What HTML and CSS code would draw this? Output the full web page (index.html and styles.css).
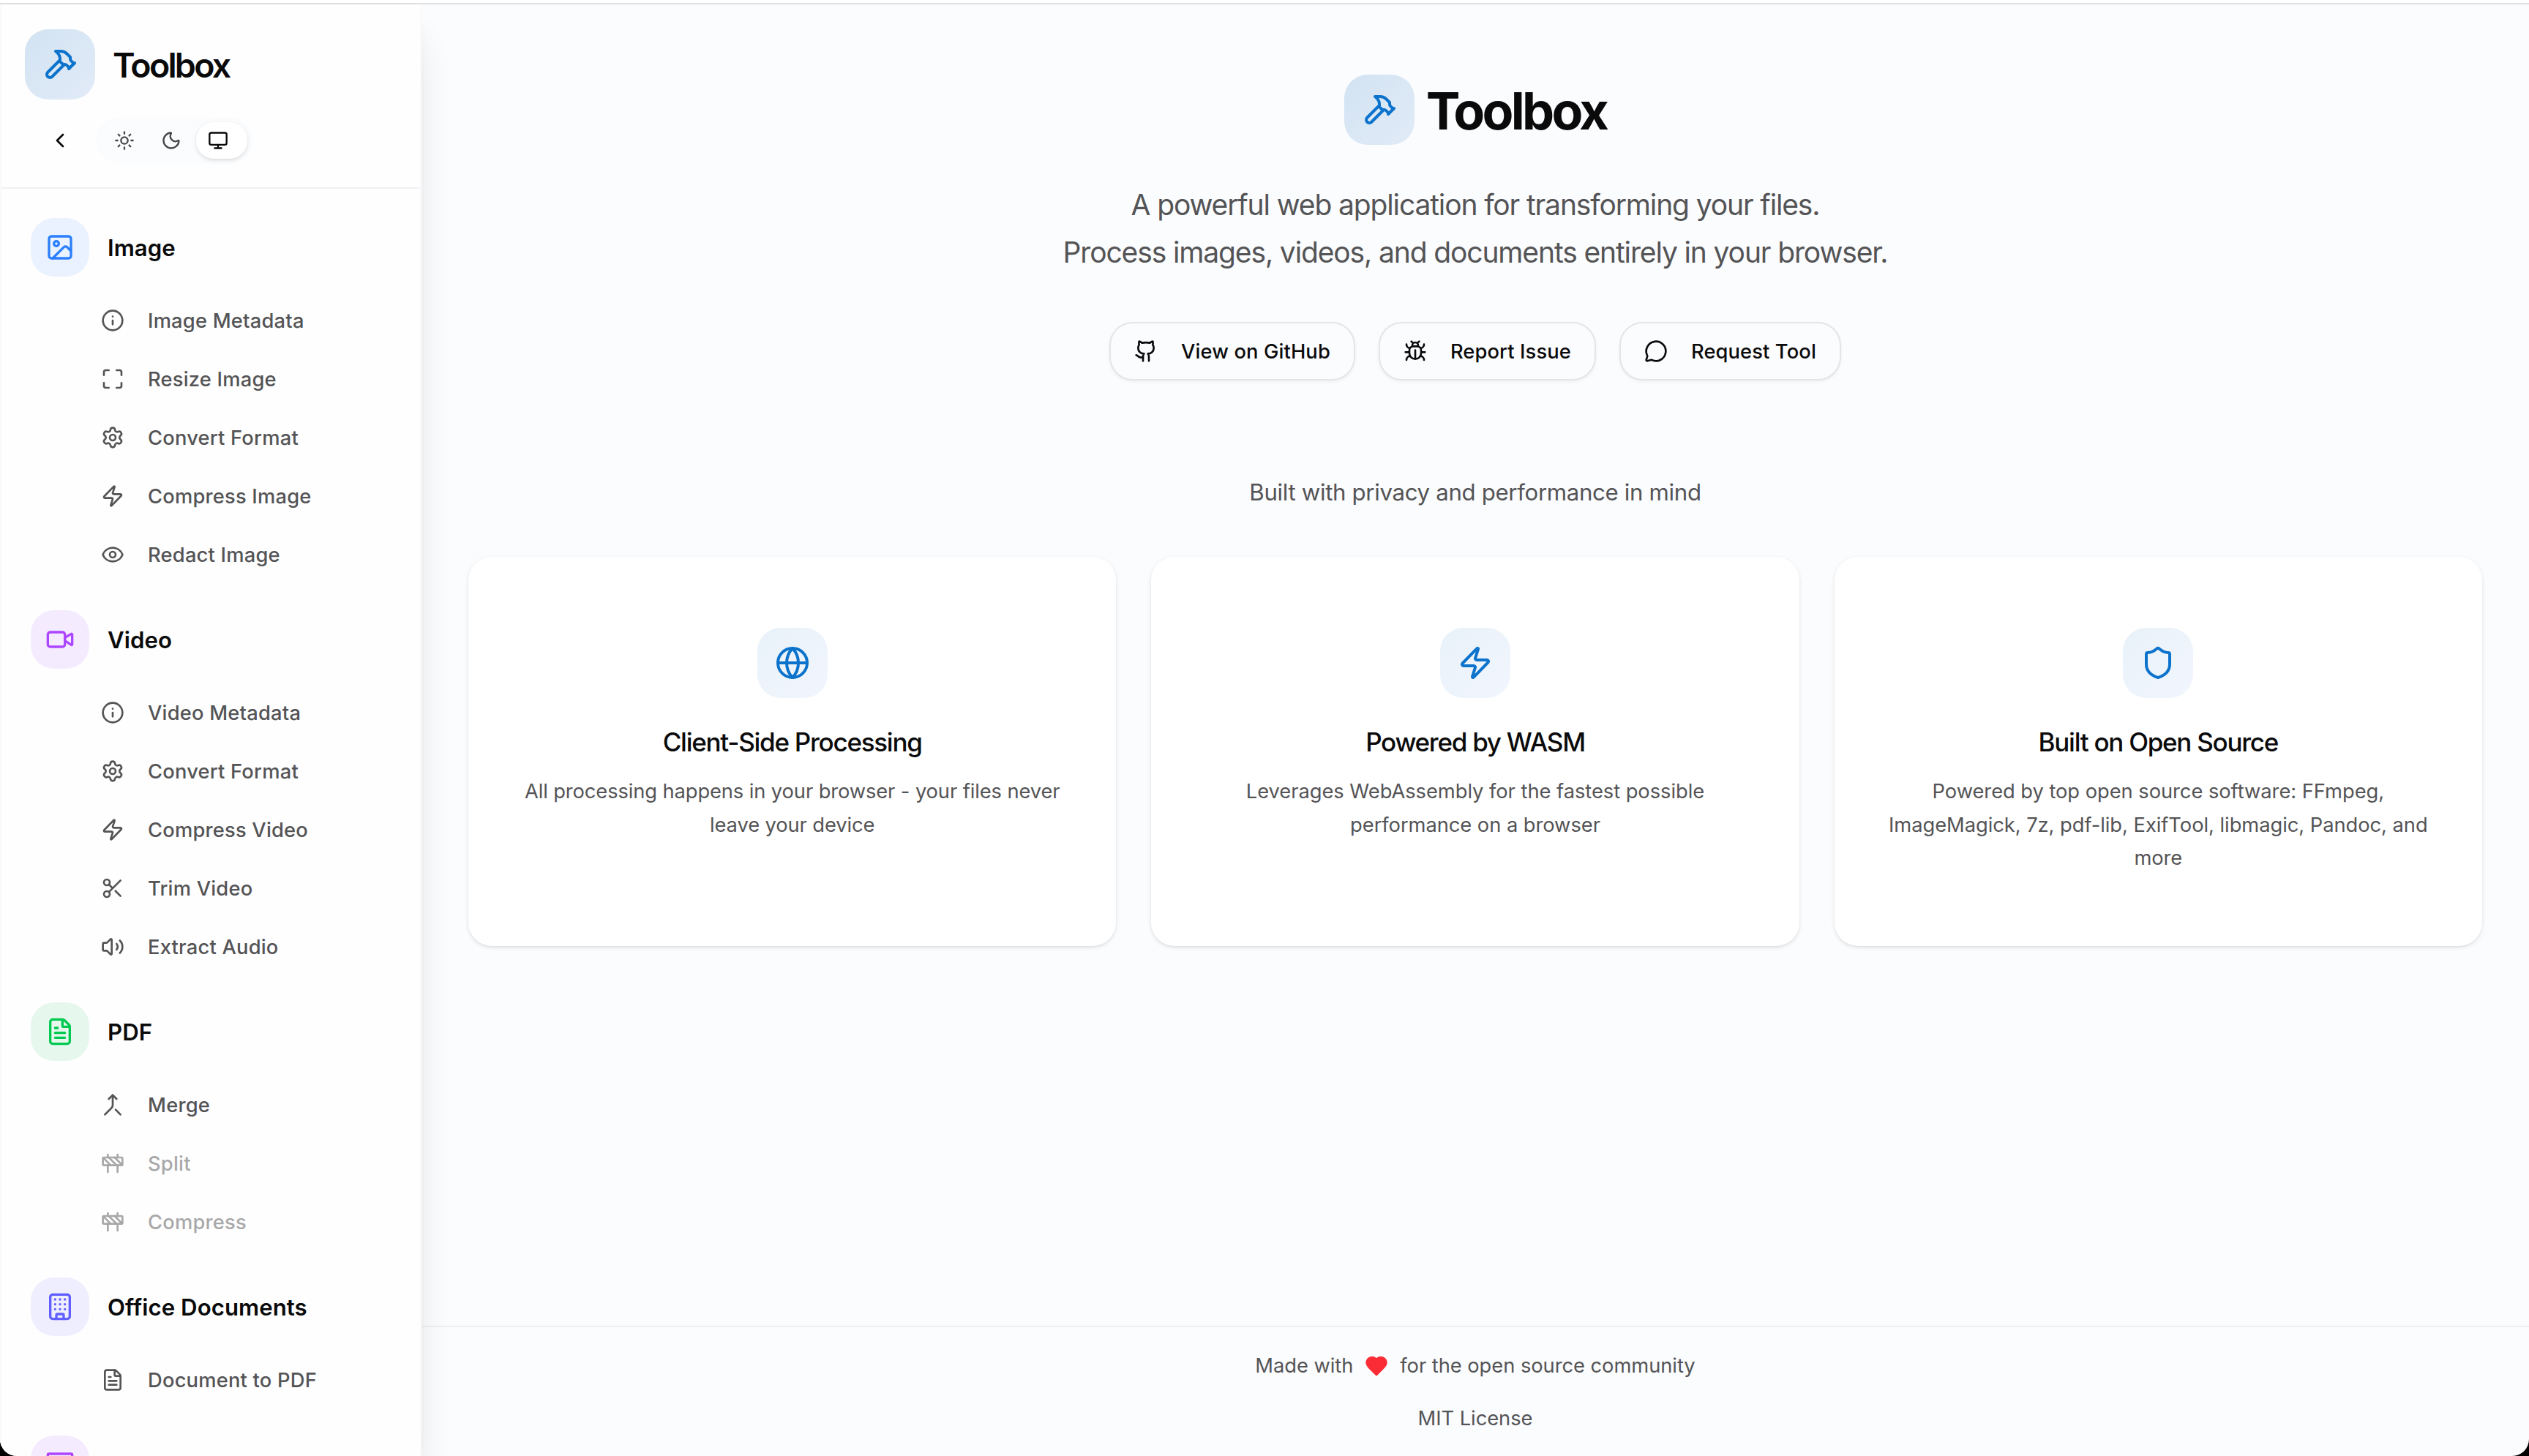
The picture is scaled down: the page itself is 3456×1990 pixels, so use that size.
FILE: index.html
```html
<!DOCTYPE html>
<html lang="en">
<head>
<meta charset="utf-8">
<title>Toolbox</title>
<link rel="stylesheet" href="styles.css">
</head>
<body>
<svg class="sprite" aria-hidden="true">
  <symbol id="hammer" viewBox="0 0 24 24"><path d="m15 12-8.373 8.373a1 1 0 1 1-3-3L12 9"/><path d="m18 15 4-4"/><path d="m21.5 11.5-1.914-1.914A2 2 0 0 1 19 8.172V7l-2.26-2.26a6 6 0 0 0-4.202-1.756L9 2.96l.92.82A6.18 6.18 0 0 1 12 8.4V10l2 2h1.172a2 2 0 0 1 1.414.586L18.5 14.5"/></symbol>
  <symbol id="chevron-left" viewBox="0 0 24 24"><path d="m15 18-6-6 6-6"/></symbol>
  <symbol id="sun" viewBox="0 0 24 24"><circle cx="12" cy="12" r="4"/><path d="M12 2v2M12 20v2M4.93 4.93l1.41 1.41M17.66 17.66l1.41 1.41M2 12h2M20 12h2M6.34 17.66l-1.41 1.41M19.07 4.93l-1.41 1.41"/></symbol>
  <symbol id="moon" viewBox="0 0 24 24"><path d="M20.985 12.486a9 9 0 1 1-9.473-9.472c.405-.022.617.46.402.803a6 6 0 0 0 8.268 8.268c.344-.215.825-.004.803.401"/></symbol>
  <symbol id="monitor" viewBox="0 0 24 24"><rect x="2" y="3" width="20" height="14" rx="2"/><path d="M8 21h8M12 17v4"/></symbol>
  <symbol id="image" viewBox="0 0 24 24"><rect x="3" y="3" width="18" height="18" rx="2"/><circle cx="9" cy="9" r="2"/><path d="m21 15-3.086-3.086a2 2 0 0 0-2.828 0L6 21"/></symbol>
  <symbol id="info" viewBox="0 0 24 24"><circle cx="12" cy="12" r="10"/><path d="M12 16v-4M12 8h.01"/></symbol>
  <symbol id="maximize" viewBox="0 0 24 24"><path d="M8 3H5a2 2 0 0 0-2 2v3M21 8V5a2 2 0 0 0-2-2h-3M3 16v3a2 2 0 0 0 2 2h3M16 21h3a2 2 0 0 0 2-2v-3"/></symbol>
  <symbol id="settings" viewBox="0 0 24 24"><path d="M9.671 4.136a2.34 2.34 0 0 1 4.659 0 2.34 2.34 0 0 0 3.319 1.915 2.34 2.34 0 0 1 2.33 4.033 2.34 2.34 0 0 0 0 3.831 2.34 2.34 0 0 1-2.33 4.033 2.34 2.34 0 0 0-3.319 1.915 2.34 2.34 0 0 1-4.659 0 2.34 2.34 0 0 0-3.32-1.915 2.34 2.34 0 0 1-2.33-4.033 2.34 2.34 0 0 0 0-3.831A2.34 2.34 0 0 1 6.35 6.051a2.34 2.34 0 0 0 3.319-1.915"/><circle cx="12" cy="12" r="3"/></symbol>
  <symbol id="zap" viewBox="0 0 24 24"><path d="M4 14a1 1 0 0 1-.78-1.63l9.9-10.2a.5.5 0 0 1 .86.46l-1.92 6.02A1 1 0 0 0 13 10h7a1 1 0 0 1 .78 1.63l-9.9 10.2a.5.5 0 0 1-.86-.46l1.92-6.02A1 1 0 0 0 11 14z"/></symbol>
  <symbol id="eye" viewBox="0 0 24 24"><path d="M2.062 12.348a1 1 0 0 1 0-.696 10.75 10.75 0 0 1 19.876 0 1 1 0 0 1 0 .696 10.75 10.75 0 0 1-19.876 0"/><circle cx="12" cy="12" r="3"/></symbol>
  <symbol id="video" viewBox="0 0 24 24"><path d="m16 13 5.223 3.482a.5.5 0 0 0 .777-.416V7.87a.5.5 0 0 0-.752-.432L16 10.5"/><rect x="2" y="6" width="14" height="12" rx="2"/></symbol>
  <symbol id="scissors" viewBox="0 0 24 24"><circle cx="6" cy="6" r="3"/><circle cx="6" cy="18" r="3"/><path d="M8.12 8.12 12 12M20 4 8.12 15.88M14.8 14.8 20 20"/></symbol>
  <symbol id="volume" viewBox="0 0 24 24"><path d="M11 4.702a.705.705 0 0 0-1.203-.498L6.413 7.587A1.4 1.4 0 0 1 5.416 8H3a1 1 0 0 0-1 1v6a1 1 0 0 0 1 1h2.416a1.4 1.4 0 0 1 .997.413l3.383 3.384A.705.705 0 0 0 11 19.298z"/><path d="M16 9a5 5 0 0 1 0 6M19.364 18.364a9 9 0 0 0 0-12.728"/></symbol>
  <symbol id="file-text" viewBox="0 0 24 24"><path d="M6 22a2 2 0 0 1-2-2V4a2 2 0 0 1 2-2h8a2.4 2.4 0 0 1 1.704.706l3.588 3.588A2.4 2.4 0 0 1 20 8v12a2 2 0 0 1-2 2z"/><path d="M14 2v5a1 1 0 0 0 1 1h5M10 9H8M16 13H8M16 17H8"/></symbol>
  <symbol id="merge" viewBox="0 0 24 24"><path d="m8 6 4-4 4 4M12 2v10.3a4 4 0 0 1-1.172 2.872L4 22M20 22l-5-5"/></symbol>
  <symbol id="construction" viewBox="0 0 24 24"><rect x="2" y="6" width="20" height="8" rx="1"/><path d="M17 14v7M7 14v7M17 3v3M7 3v3M10 14 2.3 6.3M14 6l7.7 7.7M8 6l8 8"/></symbol>
  <symbol id="building" viewBox="0 0 24 24"><rect x="4" y="2" width="16" height="20" rx="2"/><path d="M12 10h.01M12 14h.01M12 6h.01M16 10h.01M16 14h.01M16 6h.01M8 10h.01M8 14h.01M8 6h.01M9 22v-3a1 1 0 0 1 1-1h4a1 1 0 0 1 1 1v3"/></symbol>
  <symbol id="archive" viewBox="0 0 24 24"><rect x="2" y="3" width="20" height="5" rx="1"/><path d="M4 8v11a2 2 0 0 0 2 2h12a2 2 0 0 0 2-2V8M10 12h4"/></symbol>
  <symbol id="github" viewBox="0 0 24 24"><path d="M15 22v-4a4.8 4.8 0 0 0-1-3.5c3 0 6-2 6-5.5.08-1.25-.27-2.48-1-3.5.28-1.15.28-2.35 0-3.5 0 0-1 0-3 1.5-2.64-.5-5.36-.5-8 0C6 2 5 2 5 2c-.3 1.15-.3 2.35 0 3.5A5.403 5.403 0 0 0 4 9c0 3.5 3 5.5 6 5.5-.39.49-.68 1.05-.85 1.65-.17.6-.22 1.23-.15 1.85v4"/><path d="M9 18c-4.51 2-5-2-7-2"/></symbol>
  <symbol id="bug" viewBox="0 0 24 24"><path d="M12 20v-9M14 7a4 4 0 0 1 4 4v3a6 6 0 0 1-12 0v-3a4 4 0 0 1 4-4zM14.12 3.88 16 2M21 21a4 4 0 0 0-3.81-4M21 5a4 4 0 0 1-3.55 3.97M22 13h-4M3 21a4 4 0 0 1 3.81-4M3 5a4 4 0 0 0 3.55 3.97M6 13H2M8 2l1.88 1.88M9 7.13V6a3 3 0 1 1 6 0v1.13"/></symbol>
  <symbol id="message" viewBox="0 0 24 24"><path d="M2.992 16.342a2 2 0 0 1 .094 1.167l-1.065 3.29a1 1 0 0 0 1.236 1.168l3.413-.998a2 2 0 0 1 1.099.092 10 10 0 1 0-4.777-4.719"/></symbol>
  <symbol id="globe" viewBox="0 0 24 24"><circle cx="12" cy="12" r="10"/><path d="M12 2a14.5 14.5 0 0 0 0 20 14.5 14.5 0 0 0 0-20M2 12h20"/></symbol>
  <symbol id="shield" viewBox="0 0 24 24"><path d="M20 13c0 5-3.5 7.5-7.66 8.95a1 1 0 0 1-.67-.01C7.5 20.5 4 18 4 13V6a1 1 0 0 1 1-1c2 0 4.5-1.2 6.24-2.72a1.17 1.17 0 0 1 1.52 0C14.51 3.81 17 5 19 5a1 1 0 0 1 1 1z"/></symbol>
  <symbol id="heart" viewBox="0 0 24 24"><path d="M19 14c1.49-1.46 3-3.21 3-5.5A5.5 5.5 0 0 0 16.5 3c-1.76 0-3 .5-4.5 2-1.5-1.5-2.74-2-4.5-2A5.5 5.5 0 0 0 2 8.5c0 2.3 1.5 4.05 3 5.5l7 7Z"/></symbol>
</svg>

<div class="window">
  <div class="topline"></div>
  <div class="app">
    <aside class="sidebar">
      <header class="sidebar-header">
        <div class="brand">
          <span class="logo"><svg class="icon icon-xl"><use href="#hammer"/></svg></span>
          <span class="brand-name">Toolbox</span>
        </div>
        <div class="controls">
          <button class="collapse" aria-label="Collapse"><svg class="icon"><use href="#chevron-left"/></svg></button>
          <div class="themes">
            <button class="theme" aria-label="Light"><svg class="icon icon-sm"><use href="#sun"/></svg></button>
            <button class="theme" aria-label="Dark"><svg class="icon icon-sm"><use href="#moon"/></svg></button>
            <button class="theme theme-active" aria-label="System"><svg class="icon icon-sm"><use href="#monitor"/></svg></button>
          </div>
        </div>
      </header>
      <nav class="nav">
        <section class="group">
          <h2 class="group-title"><span class="tile tile-image"><svg class="icon icon-lg"><use href="#image"/></svg></span><span class="group-name">Image</span></h2>
          <ul class="links">
            <li class="link"><svg class="icon"><use href="#info"/></svg>Image Metadata</li>
            <li class="link"><svg class="icon"><use href="#maximize"/></svg>Resize Image</li>
            <li class="link"><svg class="icon"><use href="#settings"/></svg>Convert Format</li>
            <li class="link"><svg class="icon"><use href="#zap"/></svg>Compress Image</li>
            <li class="link"><svg class="icon"><use href="#eye"/></svg>Redact Image</li>
          </ul>
        </section>
        <section class="group">
          <h2 class="group-title"><span class="tile tile-video"><svg class="icon icon-lg"><use href="#video"/></svg></span><span class="group-name">Video</span></h2>
          <ul class="links">
            <li class="link"><svg class="icon"><use href="#info"/></svg>Video Metadata</li>
            <li class="link"><svg class="icon"><use href="#settings"/></svg>Convert Format</li>
            <li class="link"><svg class="icon"><use href="#zap"/></svg>Compress Video</li>
            <li class="link"><svg class="icon"><use href="#scissors"/></svg>Trim Video</li>
            <li class="link"><svg class="icon"><use href="#volume"/></svg>Extract Audio</li>
          </ul>
        </section>
        <section class="group">
          <h2 class="group-title"><span class="tile tile-pdf"><svg class="icon icon-lg"><use href="#file-text"/></svg></span><span class="group-name">PDF</span></h2>
          <ul class="links">
            <li class="link"><svg class="icon"><use href="#merge"/></svg>Merge</li>
            <li class="link link-disabled"><svg class="icon"><use href="#construction"/></svg>Split</li>
            <li class="link link-disabled"><svg class="icon"><use href="#construction"/></svg>Compress</li>
          </ul>
        </section>
        <section class="group">
          <h2 class="group-title"><span class="tile tile-office"><svg class="icon icon-lg"><use href="#building"/></svg></span><span class="group-name">Office Documents</span></h2>
          <ul class="links">
            <li class="link"><svg class="icon"><use href="#file-text"/></svg>Document to PDF</li>
          </ul>
        </section>
        <section class="group">
          <h2 class="group-title"><span class="tile tile-video"><svg class="icon icon-lg"><use href="#archive"/></svg></span></h2>
        </section>
      </nav>
    </aside>

    <div class="page">
      <main class="main">
        <div class="hero">
          <span class="logo"><svg class="icon icon-xl"><use href="#hammer"/></svg></span>
          <h1 class="hero-title">Toolbox</h1>
        </div>
        <p class="lead">A powerful web application for transforming your files.<br>Process images, videos, and documents entirely in your browser.</p>
        <div class="actions">
          <a class="button"><svg class="icon"><use href="#github"/></svg>View on GitHub</a>
          <a class="button"><svg class="icon"><use href="#bug"/></svg>Report Issue</a>
          <a class="button"><svg class="icon"><use href="#message"/></svg>Request Tool</a>
        </div>
        <p class="tagline">Built with privacy and performance in mind</p>
        <div class="cards">
          <article class="card">
            <span class="logo logo-soft"><svg class="icon icon-xl"><use href="#globe"/></svg></span>
            <h3 class="card-title">Client-Side Processing</h3>
            <p class="card-text card-text-tight">All processing happens in your browser - your files never leave your device</p>
          </article>
          <article class="card">
            <span class="logo logo-soft"><svg class="icon icon-xl"><use href="#zap"/></svg></span>
            <h3 class="card-title">Powered by WASM</h3>
            <p class="card-text">Leverages WebAssembly for the fastest possible performance on a browser</p>
          </article>
          <article class="card">
            <span class="logo logo-soft"><svg class="icon icon-xl"><use href="#shield"/></svg></span>
            <h3 class="card-title">Built on Open Source</h3>
            <p class="card-text">Powered by top open source software: FFmpeg, ImageMagick, 7z, pdf-lib, ExifTool, libmagic, Pandoc, and more</p>
          </article>
        </div>
      </main>
      <footer class="footer">
        <p class="credit">Made with <svg class="icon heart"><use href="#heart"/></svg> for the open source community</p>
        <p class="credit">MIT License</p>
      </footer>
    </div>
  </div>
</div>
</body>
</html>
```
FILE: styles.css
```css
* { box-sizing: border-box; margin: 0; padding: 0; }

body {
  background: #000;
  color: #0a0a0b;
  font-family: Inter, "Liberation Sans", sans-serif;
  font-size: 27.3px;
}

button { border: 0; background: none; color: inherit; font: inherit; }
ul { list-style: none; }

.sprite { display: none; }

.window {
  display: flex;
  flex-direction: column;
  height: 1990px;
  overflow: hidden;
  border-radius: 0 0 23px 23px;
  background: #fbfcfe;
}

.topline {
  flex: none;
  height: 6px;
  border-bottom: 2px solid #dedee0;
  background: #fff;
}

.app { display: flex; flex: 1; min-height: 0; }

.icon {
  flex: none;
  width: 32px;
  height: 32px;
  fill: none;
  stroke: currentColor;
  stroke-width: 2;
  stroke-linecap: round;
  stroke-linejoin: round;
}
.icon-sm { width: 28px; height: 28px; }
.icon-lg { width: 40px; height: 40px; }
.icon-xl { width: 48px; height: 48px; }

.logo {
  display: flex;
  flex: none;
  align-items: center;
  justify-content: center;
  width: 96px;
  height: 96px;
  border-radius: 32px;
  background: linear-gradient(135deg, #d2e3f2, #e2ebf8);
  color: #0c73cc;
}
.logo-soft { background: linear-gradient(135deg, #e8f1f9, #f2f6fe); }

/* Sidebar */
.sidebar {
  z-index: 1;
  flex: none;
  width: 576px;
  border: solid #fafafb;
  border-width: 0 2px;
  background: #fefefe;
  box-shadow: 0 40px 50px -10px rgba(0, 0, 0, .12), 0 16px 20px -12px rgba(0, 0, 0, .1);
}

.sidebar-header {
  height: 252px;
  padding: 34px 32px 0;
  border-bottom: 2px solid #f1f1f3;
}

.brand { display: flex; align-items: center; gap: 24px; }
.brand-name {
  padding-top: 2px;
  font-size: 46.5px;
  font-weight: 600;
  letter-spacing: -2.75px;
}

.controls { display: flex; align-items: center; gap: 2px; margin-top: 24px; }
.collapse {
  display: flex;
  align-items: center;
  justify-content: center;
  width: 96px;
  height: 64px;
}
.themes {
  display: flex;
  align-items: center;
  gap: 8px;
  height: 64px;
  padding: 0 8px;
  border-radius: 32px;
  background: #fbfcfe;
}
.theme {
  display: flex;
  align-items: center;
  width: 56px;
  height: 50px;
  padding-left: 16px;
  border-radius: 24px;
  color: #48484b;
}
.theme-active {
  width: 70px;
  background: #fff;
  color: #0a0a0b;
  box-shadow: 0 2px 6px rgba(0, 0, 0, .1), 0 2px 4px -2px rgba(0, 0, 0, .1);
}

.nav {
  display: flex;
  flex-direction: column;
  gap: 40px;
  padding: 40px;
}
.group-title {
  display: flex;
  align-items: center;
  gap: 25px;
  font-size: 31.2px;
  font-weight: 600;
  letter-spacing: .05px;
}
.group-name { padding-top: 2px; }
.tile {
  display: flex;
  align-items: center;
  justify-content: center;
  width: 80px;
  height: 80px;
  border-radius: 32px;
}
.tile-image { background: #eaf2ff; color: #2b7fff; }
.tile-video { background: #f5ebff; color: #ad46ff; }
.tile-pdf { background: #e6f7ed; color: #00c950; }
.tile-office { background: #eeeeff; color: #615fff; }

.links {
  display: flex;
  flex-direction: column;
  gap: 8px;
  margin: 24px 0 0 96px;
}
.link {
  display: flex;
  align-items: center;
  gap: 32px;
  height: 72px;
  color: #545456;
  font-weight: 450;
  letter-spacing: .22px;
}
.link-disabled { opacity: .5; }

/* Page */
.page { display: flex; flex: 1; flex-direction: column; }

.main {
  display: flex;
  flex: 1;
  flex-direction: column;
  align-items: center;
  padding: 96px 64px 0;
  text-align: center;
}

.hero { display: flex; align-items: center; gap: 16px; }
.hero-title {
  padding-top: 3px;
  font-size: 70px;
  font-weight: 700;
  letter-spacing: -3.7px;
}

.lead {
  margin-top: 49px;
  color: #545456;
  font-size: 39px;
  line-height: 65px;
  letter-spacing: -1.13px;
}

.actions { display: flex; gap: 32px; margin-top: 63px; }
.button {
  display: flex;
  align-items: center;
  gap: 32px;
  height: 80px;
  padding: 0 32px;
  border: 2px solid #e5e5e8;
  border-radius: 32px;
  box-shadow: 0 2px 4px rgba(0, 0, 0, .05);
  background: #fbfcfe;
  font-weight: 500;
  letter-spacing: .12px;
}

.tagline {
  padding-top: 129px;
  color: #545456;
  font-size: 31.2px;
  line-height: 49px;
  letter-spacing: -.33px;
}

.cards {
  display: grid;
  grid-template-columns: repeat(3, 1fr);
  gap: 48px;
  width: 100%;
  margin-top: 63px;
}
.card {
  display: flex;
  flex-direction: column;
  align-items: center;
  min-height: 532px;
  padding: 97px 64px 96px;
  border-radius: 32px;
  background: #fff;
  box-shadow: 0 2px 6px rgba(0, 0, 0, .09), 0 2px 4px -2px rgba(0, 0, 0, .1);
}
.card-title {
  margin-top: 32px;
  font-size: 35px;
  font-weight: 500;
  line-height: 56px;
  letter-spacing: -1.27px;
}
.card-text {
  margin-top: 17px;
  color: #545456;
  line-height: 45.5px;
  letter-spacing: -.04px;
}
.card-text-tight { letter-spacing: -.1px; }

.footer {
  display: flex;
  flex-direction: column;
  gap: 24px;
  align-items: center;
  padding: 29px 0 27px;
  border-top: 2px solid #eff0f2;
  color: #545456;
}
.credit {
  display: flex;
  align-items: center;
  gap: 16px;
  line-height: 48px;
  letter-spacing: -.04px;
}
.heart { color: #fb2c36; fill: currentColor; }
```
